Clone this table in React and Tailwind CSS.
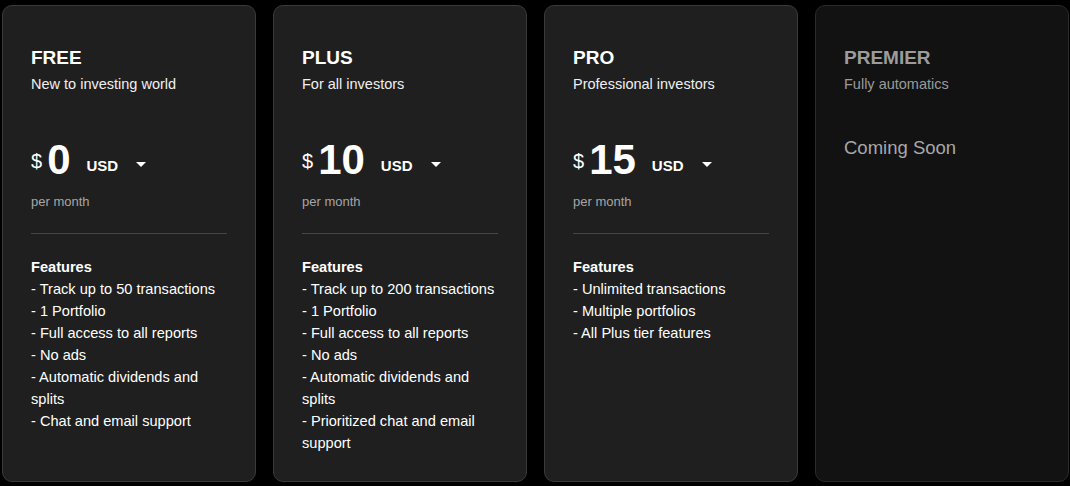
import React from 'react';

const plans = [
  {
    name: 'FREE',
    tagline: 'New to investing world',
    price: '0',
    features: [
      'Track up to 50 transactions',
      '1 Portfolio',
      'Full access to all reports',
      'No ads',
      'Automatic dividends and splits',
      'Chat and email support',
    ],
  },
  {
    name: 'PLUS',
    tagline: 'For all investors',
    price: '10',
    features: [
      'Track up to 200 transactions',
      '1 Portfolio',
      'Full access to all reports',
      'No ads',
      'Automatic dividends and splits',
      'Prioritized chat and email support',
    ],
  },
  {
    name: 'PRO',
    tagline: 'Professional investors',
    price: '15',
    features: ['Unlimited transactions', 'Multiple portfolios', 'All Plus tier features'],
  },
];

const Caret = () => (
  <svg width="10" height="5" viewBox="0 0 10 5" className="ml-[18px] mb-[14px]">
    <path d="M0 0 L10 0 L5 5 Z" fill="#ffffff" />
  </svg>
);

const PlanCard = ({ plan }) => {
  return (
    <div className="w-[254px] shrink-0 rounded-[10px] border border-[#3a3a3a] bg-[#1f1f1f] px-[28px] pt-[40px] text-white">
      <h2 className="text-[19px] leading-[24px] font-bold">{plan.name}</h2>
      <p className="mt-[4px] text-[14.5px] leading-[20px] text-[#f0f0f0]">{plan.tagline}</p>
      <div className="mt-[45px] flex items-end">
        <span className="text-[20px] leading-none mb-[10px]">$</span>
        <span className="ml-[5px] text-[42px] leading-none font-bold">{plan.price}</span>
        <span className="ml-[16px] mb-[8px] text-[15px] leading-none font-bold">USD</span>
        <Caret />
      </div>
      <p className="mt-[12px] text-[13px] leading-[18px] text-[#a6a6a6]">per month</p>
      <div className="mt-[22px] h-px bg-[#454545]" />
      <div className="mt-[22px] text-[14.6px] leading-[22px]">
        <p className="font-bold">Features</p>
        <ul>
          {plan.features.map((f) => (
            <li key={f}>- {f}</li>
          ))}
        </ul>
      </div>
    </div>
  );
};

export default function App() {
  return (
    <div
      className="w-[1070px] h-[486px] bg-black flex gap-[17px] pl-[2px] pt-[5px] pb-[4px] overflow-hidden"
      style={{ fontFamily: '"Liberation Sans", Arial, sans-serif' }}
    >
      {plans.map((p) => (
        <PlanCard key={p.name} plan={p} />
      ))}
      <div className="w-[254px] shrink-0 rounded-[10px] border border-[#2a2a2a] bg-[#121212] px-[28px] pt-[40px]">
        <h2 className="text-[19px] leading-[24px] font-bold text-[#9c9c9c]">PREMIER</h2>
        <p className="mt-[4px] text-[14.5px] leading-[20px] text-[#9a9a9a]">Fully automatics</p>
        <p className="mt-[42px] text-[18.5px] leading-[24px] text-[#a8a8a8]">Coming Soon</p>
      </div>
    </div>
  );
}
